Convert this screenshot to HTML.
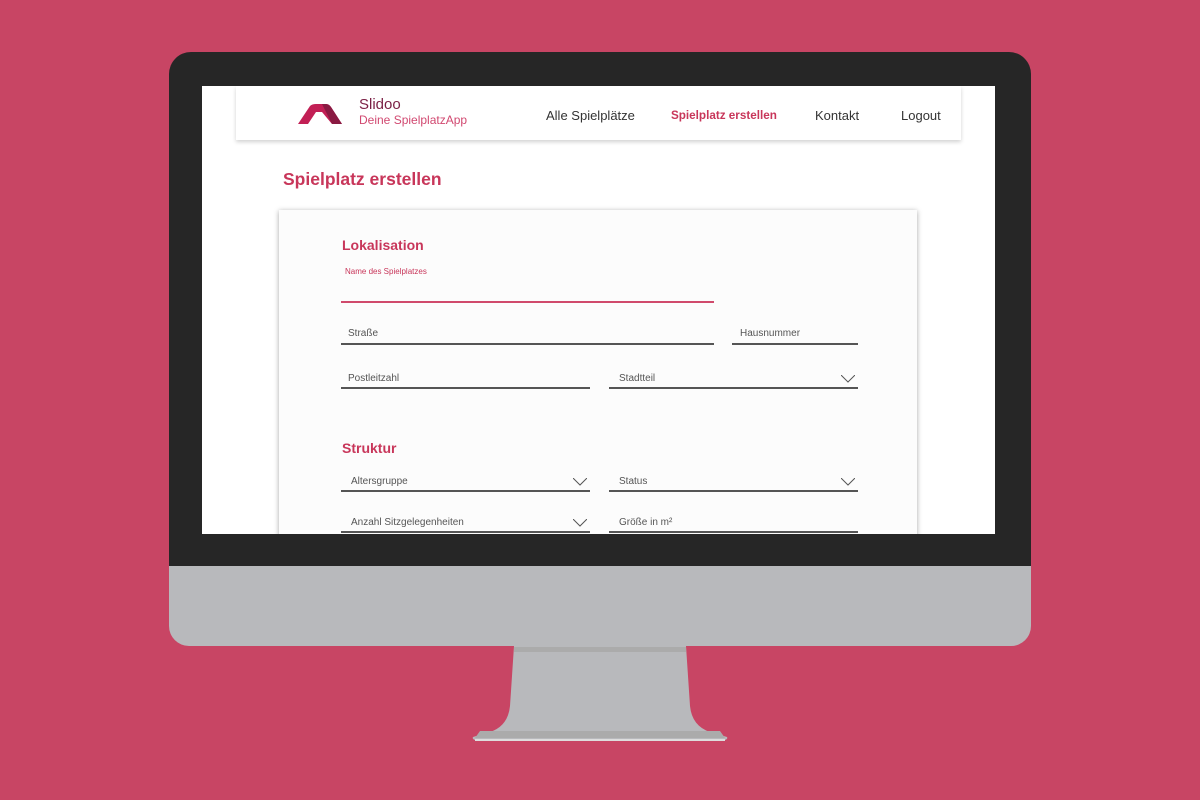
<!DOCTYPE html>
<html><head><meta charset="utf-8"><style>
*{margin:0;padding:0;box-sizing:border-box}
body{width:1200px;height:800px;background:#c84564;position:relative;overflow:hidden;font-family:"Liberation Sans",sans-serif}
.a{position:absolute}
.bezel{left:169px;top:52px;width:862px;height:514px;background:#262626;border-radius:22px 22px 0 0}
.chin{left:169px;top:566px;width:862px;height:80px;background:#b8b9bc;border-radius:0 0 20px 20px}
.screen{left:202px;top:86px;width:793px;height:448px;background:#fff;overflow:hidden}
.nav{left:34px;top:0;width:725px;height:54px;background:#fff;box-shadow:0 2px 4px rgba(0,0,0,.18)}
.nl{font-size:13px;color:#333;top:22px}
.lbl{font-size:10px;color:#555}
.line{height:1.5px;background:#555}
.chev{width:14px;height:8px}
</style></head><body>
<div class="a bezel"></div>
<div class="a chin"></div>
<svg class="a" style="left:470px;top:646px" width="260" height="100">
<path d="M44 0 L216 0 L220 60 Q222 80 240 86 L257 91 Q258 93 255 94 L5 94 Q2 93 3 91 L20 86 Q38 80 40 60 Z" fill="#b8b9bc"/>
<rect x="44" y="1" width="172" height="5" fill="#ababab"/>
<path d="M10 85 L250 85 L255 92 L5 92 Z" fill="#ababab"/>
<rect x="5" y="93" width="250" height="2" fill="#ddd"/>
</svg>
<div class="a screen">
 <div class="a nav">
  <svg class="a" style="left:62px;top:18px" width="44" height="20"><path d="M0 20 L12 2 Q14 0 18 0 L28 0 Q31 0 33 3 L44 20 L34 20 L24 8 L18 8 L10 20 Z" fill="#c21f55"/><path d="M24 0 L28 0 Q31 0 33 3 L44 20 L34 20 Z" fill="#8a1a42"/></svg>
  <div class="a" style="left:123px;top:10px;font-size:15px;color:#7a1f44">Slidoo</div>
  <div class="a" style="left:123px;top:27px;font-size:12px;color:#d14870">Deine SpielplatzApp</div>
  <div class="a nl" style="left:310px">Alle Spielplätze</div>
  <div class="a nl" style="left:435px;color:#c8365a;font-weight:bold;font-size:11.7px;top:23px">Spielplatz erstellen</div>
  <div class="a nl" style="left:579px">Kontakt</div>
  <div class="a nl" style="left:665px">Logout</div>
 </div>
 <div class="a" style="left:81px;top:83px;font-size:17.5px;font-weight:bold;color:#c8365a">Spielplatz erstellen</div>
 <div class="a" style="left:77px;top:124px;width:638px;height:340px;background:#fcfcfc;box-shadow:0 1px 5px rgba(0,0,0,.35)">
  <div class="a" style="left:63px;top:27px;font-size:14px;font-weight:bold;color:#c8365a">Lokalisation</div>
  <div class="a" style="left:66px;top:57px;font-size:8px;color:#c8365a">Name des Spielplatzes</div>
  <div class="a line" style="left:62px;top:91px;width:373px;background:#d04a6c"></div>
  <div class="a lbl" style="left:69px;top:118px">Straße</div>
  <div class="a line" style="left:62px;top:133px;width:373px"></div>
  <div class="a lbl" style="left:461px;top:118px">Hausnummer</div>
  <div class="a line" style="left:453px;top:133px;width:126px"></div>
  <div class="a lbl" style="left:69px;top:163px">Postleitzahl</div>
  <div class="a line" style="left:62px;top:177px;width:249px"></div>
  <div class="a lbl" style="left:340px;top:163px">Stadtteil</div>
  <svg class="a chev" style="left:562px;top:165px"><path d="M0 0 L7 7 L14 0" stroke="#555" fill="none"/></svg>
  <div class="a line" style="left:330px;top:177px;width:249px"></div>
  <div class="a" style="left:63px;top:230px;font-size:14px;font-weight:bold;color:#c8365a">Struktur</div>
  <div class="a lbl" style="left:72px;top:266px">Altersgruppe</div>
  <svg class="a chev" style="left:294px;top:268px"><path d="M0 0 L7 7 L14 0" stroke="#555" fill="none"/></svg>
  <div class="a line" style="left:62px;top:280px;width:249px"></div>
  <div class="a lbl" style="left:340px;top:266px">Status</div>
  <svg class="a chev" style="left:562px;top:268px"><path d="M0 0 L7 7 L14 0" stroke="#555" fill="none"/></svg>
  <div class="a line" style="left:330px;top:280px;width:249px"></div>
  <div class="a lbl" style="left:72px;top:307px">Anzahl Sitzgelegenheiten</div>
  <svg class="a chev" style="left:294px;top:309px"><path d="M0 0 L7 7 L14 0" stroke="#555" fill="none"/></svg>
  <div class="a line" style="left:62px;top:321px;width:249px"></div>
  <div class="a lbl" style="left:340px;top:307px">Größe in m²</div>
  <div class="a line" style="left:330px;top:321px;width:249px"></div>
 </div>
</div>
</body></html>
